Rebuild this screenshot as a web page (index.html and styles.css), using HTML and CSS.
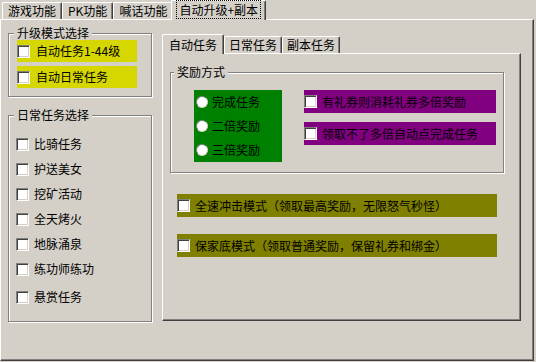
FILE: index.html
```html
<!DOCTYPE html>
<html lang="zh-CN">
<head>
    <meta charset="UTF-8">
    <title>自动升级+副本</title>
    <link rel="stylesheet" href="styles.css">
</head>
<body>
    <div class="tabs top-tabs">
        <div class="tab">游戏功能</div>
        <div class="tab">PK功能</div>
        <div class="tab">喊话功能</div>
        <div class="tab active"><span class="focus">自动升级+副本</span></div>
    </div>

    <div class="panel main-panel">
        <div class="left-col">
            <fieldset class="group mode-group">
                <legend>升级模式选择</legend>
                <label class="opt yellow"><span class="check"></span>自动任务1-44级</label>
                <label class="opt yellow"><span class="check"></span>自动日常任务</label>
            </fieldset>

            <fieldset class="group daily-group">
                <legend>日常任务选择</legend>
                <label class="opt"><span class="check"></span>比骑任务</label>
                <label class="opt"><span class="check"></span>护送美女</label>
                <label class="opt"><span class="check"></span>挖矿活动</label>
                <label class="opt"><span class="check"></span>全天烤火</label>
                <label class="opt"><span class="check"></span>地脉涌泉</label>
                <label class="opt"><span class="check"></span>练功师练功</label>
                <label class="opt bounty"><span class="check"></span>悬赏任务</label>
            </fieldset>
        </div>

        <div class="right-col">
            <div class="tabs inner-tabs">
                <div class="tab active">自动任务</div>
                <div class="tab">日常任务</div>
                <div class="tab">副本任务</div>
            </div>
            <div class="panel inner-panel">
                <fieldset class="group reward-group">
                    <legend>奖励方式</legend>
                    <div class="reward-body">
                        <div class="radios">
                            <label class="radio-row"><span class="radio"></span>完成任务</label>
                            <label class="radio-row"><span class="radio"></span>二倍奖励</label>
                            <label class="radio-row"><span class="radio"></span>三倍奖励</label>
                        </div>
                        <div class="purple-list">
                            <label class="opt purple"><span class="check"></span>有礼券则消耗礼券多倍奖励</label>
                            <label class="opt purple"><span class="check"></span>领取不了多倍自动点完成任务</label>
                        </div>
                    </div>
                </fieldset>

                <label class="opt olive fast"><span class="check"></span>全速冲击模式（领取最高奖励，无限怒气秒怪）</label>
                <label class="opt olive safe"><span class="check"></span>保家底模式（领取普通奖励，保留礼券和绑金）</label>
            </div>
        </div>
    </div>
</body>
</html>
```

FILE: styles.css
```css
:root {
    --face: #d4d0c8;
    --shadow: #808080;
    --dark: #404040;
    --hilite: #ffffff;
    --yellow: #d6d600;
    --purple: #800080;
    --green: #008000;
    --olive: #808000;
}

* {
    box-sizing: border-box;
}

body {
    margin: 0;
    width: 536px;
    height: 362px;
    overflow: hidden;
    background-color: var(--face);
    font-family: "Noto Sans CJK SC", sans-serif;
    font-size: 12px;
    line-height: 14px;
    color: #000;
}

/* tab strips */
.tabs {
    display: flex;
    align-items: flex-end;
    height: 19px;
}

.top-tabs {
    padding-left: 2px;
}

.tab {
    height: 17px;
    padding: 1px 5px 0;
    border: 1px solid var(--hilite);
    border-bottom: none;
    border-right-color: var(--dark);
    border-radius: 2px 2px 0 0;
    box-shadow: inset -1px 0 var(--shadow);
    white-space: nowrap;
}

.tab.active {
    position: relative;
    z-index: 1;
    height: 20px;
    margin: 0 -2px -1px;
    padding-top: 2px;
    background-color: var(--face);
}

.focus {
    outline: 1px dotted #000;
    padding: 0 2px;
}

.inner-tabs .tab {
    padding: 1px 4px 0;
}

.inner-tabs .tab.active {
    margin: 0 0 -1px;
    padding: 3px 6px 0;
}

/* raised panels */
.panel {
    border: 1px solid;
    border-color: var(--hilite) var(--dark) var(--dark) var(--hilite);
    box-shadow: inset -1px -1px var(--shadow);
}

.main-panel {
    width: 534px;
    height: 342px;
    display: flex;
    align-items: flex-start;
    padding-left: 7px;
}

.left-col {
    width: 144px;
    padding-top: 6px;
}

.right-col {
    width: 359px;
    margin: 14px 0 0 10px;
}

.inner-panel {
    height: 268px;
    padding: 11px 0 0 7px;
}

/* etched group boxes */
.group {
    margin: 0;
    min-width: 0;
    border: 1px solid var(--shadow);
    box-shadow: 1px 1px var(--hilite), inset 1px 1px var(--hilite);
}

.group legend {
    padding: 0 3px;
    background-color: var(--face);
    line-height: 14px;
}

.mode-group {
    width: 144px;
    padding: 0 0 8px 8px;
}

.mode-group legend {
    margin-left: -3px;
}

.daily-group {
    width: 144px;
    margin-top: 11px;
    padding: 12px 7px 14px;
}

.daily-group legend {
    margin-left: -2px;
}

.reward-group {
    width: 334px;
    padding: 11px 7px 10px;
}

.reward-group legend {
    margin-left: -4px;
}

/* options */
.opt {
    display: flex;
    align-items: center;
    height: 20px;
    white-space: nowrap;
}

.check {
    flex: none;
    width: 13px;
    height: 13px;
    margin-right: 5px;
    background-color: #fff;
    border: 1px solid;
    border-color: var(--shadow) var(--hilite) var(--hilite) var(--shadow);
    box-shadow: inset 1px 1px var(--dark), inset -1px -1px var(--face);
}

.yellow {
    width: 120px;
    height: 22px;
    background-color: var(--yellow);
}

.yellow .check {
    margin-right: 6px;
}

.yellow + .yellow {
    margin-top: 4px;
}

.daily-group .opt + .opt {
    margin-top: 5px;
}

.daily-group .opt.bounty {
    margin-top: 8px;
}

.reward-body {
    display: flex;
    gap: 22px;
    padding-left: 16px;
}

.radios {
    width: 88px;
    height: 72px;
    background-color: var(--green);
}

.radio-row {
    display: flex;
    align-items: center;
    height: 24px;
    padding-left: 2px;
    white-space: nowrap;
}

.radio {
    flex: none;
    width: 12px;
    height: 12px;
    margin-right: 4px;
    border-radius: 50%;
    background-color: #fff;
    border: 1px solid;
    border-color: var(--shadow) var(--face) var(--face) var(--shadow);
}

.purple-list {
    display: flex;
    flex-direction: column;
    gap: 9px;
}

.purple {
    width: 192px;
    height: 23px;
    background-color: var(--purple);
}

.olive {
    width: 320px;
    height: 23px;
    margin-left: 7px;
    background-color: var(--olive);
}

.olive.fast {
    margin-top: 21px;
}

.olive.safe {
    margin-top: 17px;
}
```
